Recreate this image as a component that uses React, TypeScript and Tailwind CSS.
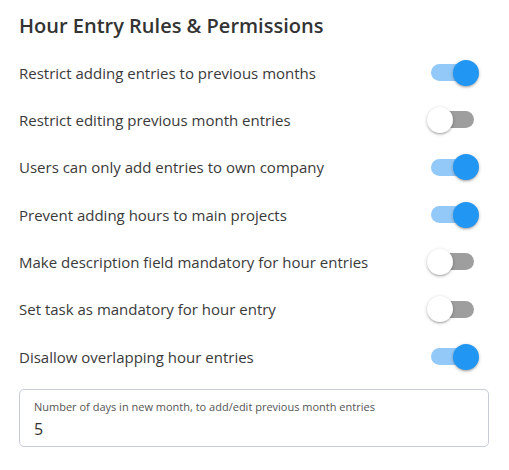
import React, { useState } from 'react';

const rules = [
  { label: 'Restrict adding entries to previous months', on: true },
  { label: 'Restrict editing previous month entries', on: false },
  { label: 'Users can only add entries to own company', on: true },
  { label: 'Prevent adding hours to main projects', on: true },
  { label: 'Make description field mandatory for hour entries', on: false },
  { label: 'Set task as mandatory for hour entry', on: false },
  { label: 'Disallow overlapping hour entries', on: true },
];

function Toggle({ on, onClick }: { on: boolean; onClick: () => void }) {
  return (
    <button type="button" onClick={onClick} className="relative w-[52px] h-[26px] shrink-0">
      <span
        className={`absolute left-[4px] top-[4.5px] w-[43px] h-[17px] rounded-full ${
          on ? 'bg-[#93c9f9]' : 'bg-[#9e9e9e]'
        }`}
      />
      <span
        className={`absolute top-0 w-[26px] h-[26px] rounded-full shadow-[0_2px_2px_-1px_rgba(0,0,0,0.2),0_1px_3px_0_rgba(0,0,0,0.14),0_1px_4px_0_rgba(0,0,0,0.12)] ${
          on ? 'left-[26px] bg-[#2196f3]' : 'left-0 bg-white'
        }`}
      />
    </button>
  );
}

export default function App() {
  const [state, setState] = useState(rules.map((r) => r.on));

  return (
    <div className="w-[509px] h-[470px] bg-white pl-[19px] pr-[20px] pt-[12px] font-['Open_Sans',sans-serif] text-[#333]">
      <h2 className="text-[20px] leading-[28px] font-semibold">Hour Entry Rules &amp; Permissions</h2>

      <div className="mt-[9px] pr-[10px]">
        {rules.map((rule, i) => (
          <div key={rule.label} className="h-[47.33px] flex items-center justify-between">
            <span className="text-[15px] leading-[20px] text-[#3a3a3a]">{rule.label}</span>
            <Toggle
              on={state[i]}
              onClick={() => setState((s) => s.map((v, j) => (j === i ? !v : v)))}
            />
          </div>
        ))}
      </div>

      <div className="mt-[9px] h-[58px] border border-[#c7ccd6] rounded-[5px] pl-[14px] pt-[9px]">
        <div className="text-[11px] leading-[16px] text-[#555]">
          Number of days in new month, to add/edit previous month entries
        </div>
        <div className="mt-[3px] text-[16px] leading-[22px] text-[#333]">5</div>
      </div>
    </div>
  );
}
